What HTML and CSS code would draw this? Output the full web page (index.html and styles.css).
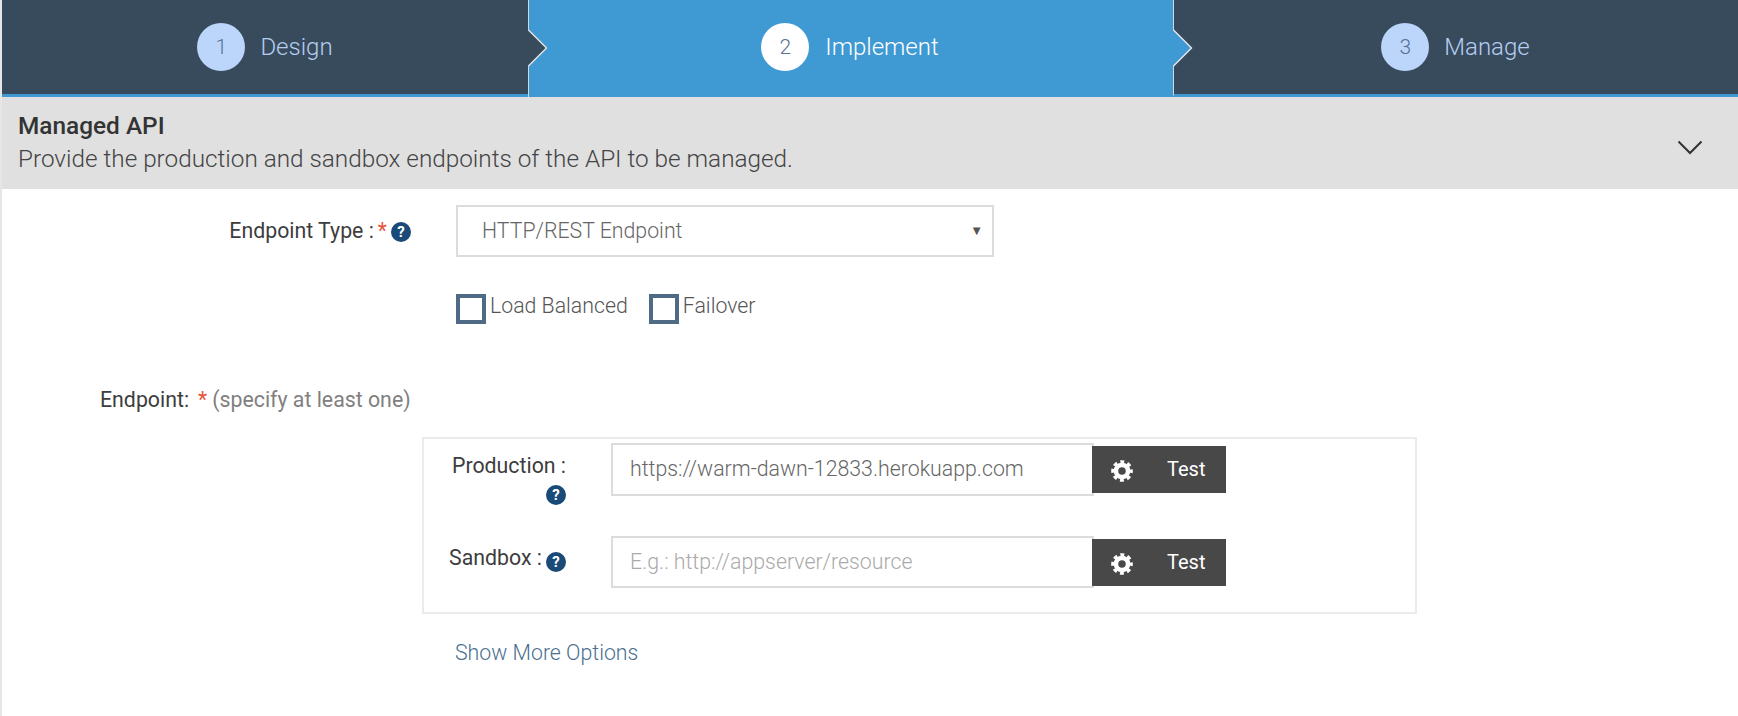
FILE: index.html
```html
<!DOCTYPE html>
<html lang="en">
<head>
<meta charset="utf-8">
<title>Managed API</title>
<link rel="stylesheet" href="styles.css">
</head>
<body>
<div class="page">
  <nav class="wizard">
    <div class="step step-one">
      <span class="num">1</span><span class="step-name">Design</span>
      <svg class="tip" width="20" height="38" viewBox="0 0 20 38"><path d="M0 0L19 19L0 38Z" fill="#384b5d"/><path d="M0 0.5L18.5 19L0 37.5" fill="none" stroke="#e6e6e6" stroke-width="1.4"/></svg>
    </div>
    <div class="step step-two">
      <span class="num">2</span><span class="step-name">Implement</span>
      <svg class="tip" width="20" height="38" viewBox="0 0 20 38"><path d="M0 0L19 19L0 38Z" fill="#3f99d3"/><path d="M0 0.5L18.5 19L0 37.5" fill="none" stroke="#e6e6e6" stroke-width="1.4"/></svg>
    </div>
    <div class="step step-three">
      <span class="num">3</span><span class="step-name">Manage</span>
    </div>
  </nav>
  <header class="section-head">
    <div>
      <h1 class="section-title">Managed API</h1>
      <p class="section-desc">Provide the production and sandbox endpoints of the API to be managed.</p>
    </div>
    <svg class="chevron" width="26" height="15" viewBox="0 0 26 15"><path d="M1.5 1.5L13 13L24.5 1.5" fill="none" stroke="#333" stroke-width="2"/></svg>
  </header>
  <main class="form">
    <div class="row-type">
      <div class="type-label">Endpoint Type :<span class="req">*</span><span class="help">?</span></div>
      <div class="select"><span>HTTP/REST Endpoint</span><span class="caret">▼</span></div>
    </div>
    <div class="checks">
      <label class="check"><span class="box"></span>Load Balanced</label>
      <label class="check"><span class="box"></span>Failover</label>
    </div>
    <div class="endpoint-label">Endpoint:<span class="req req-gap">*</span><span class="hint">(specify at least one)</span></div>
    <section class="panel">
      <div class="ep-row ep-prod">
        <div class="ep-label">Production :<span class="help help-block">?</span></div>
        <div class="ep-input">https://warm-dawn-12833.herokuapp.com</div>
        <button class="test" type="button">
          <svg class="gear" width="22" height="22" viewBox="0 0 24 24"><circle class="gear-ring" cx="12" cy="12" r="6.6"/><circle class="gear-teeth" cx="12" cy="12" r="10"/></svg>
          <span>Test</span>
        </button>
      </div>
      <div class="ep-row ep-sand">
        <div class="ep-label">Sandbox :<span class="help help-inline">?</span></div>
        <div class="ep-input ep-placeholder">E.g.: http://appserver/resource</div>
        <button class="test" type="button">
          <svg class="gear" width="22" height="22" viewBox="0 0 24 24"><circle class="gear-ring" cx="12" cy="12" r="6.6"/><circle class="gear-teeth" cx="12" cy="12" r="10"/></svg>
          <span>Test</span>
        </button>
      </div>
    </section>
    <a class="more" href="#">Show More Options</a>
  </main>
</div>
</body>
</html>
```

FILE: styles.css
```css
* { box-sizing: border-box; }
html, body { margin: 0; height: 100%; overflow: hidden; background: #fff; }
body { font-family: Roboto, "Liberation Sans", sans-serif; color: #4a4a4a; }
.page { height: 716px; border-left: 2px solid #e6e6e6; }

.wizard { display: flex; height: 97px; }
.step { position: relative; display: flex; align-items: center; justify-content: center; height: 97px; padding-bottom: 4px; }
.step-one { width: 526px; background: #384b5d; border-bottom: 3px solid #3f99d3; padding-bottom: 1px; }
.step-two { width: 645px; background: #3f99d3; border-left: 1px solid #cfdbe4; padding-right: 2px; }
.step-three { width: 565px; background: #384b5d; border-left: 1px solid #cfdbe4; border-bottom: 3px solid #3f99d3; padding-bottom: 1px; padding-right: 1px; }
.num { width: 48px; height: 48px; border-radius: 50%; background: #bcd6fb; color: #5b7191; display: flex; align-items: center; justify-content: center; font-size: 21px; font-weight: 300; margin-right: 16px; }
.step-one .num, .step-three .num { margin-right: 15px; }
.step-two .num { background: #fff; }
.step-name { font-size: 24px; font-weight: 300; color: #b5cdf0; }
.step-two .step-name { color: #fff; }
.tip { position: absolute; left: 100%; top: 29px; z-index: 2; }

.section-head { height: 92px; background: #e0e0e0; display: flex; justify-content: space-between; align-items: center; padding: 0 35px 0 16px; }
.section-title { margin: 0; font-size: 24.4px; line-height: 30px; font-weight: 500; color: #333; }
.section-desc { margin: 1px 0 0; font-size: 24.3px; line-height: 34px; font-weight: 300; color: #444; }
.chevron { margin-top: 8px; }

.form { font-size: 21.3px; }
.row-type { display: flex; padding-top: 16px; height: 67px; }
.type-label { width: 454px; padding-right: 45px; display: flex; justify-content: flex-end; align-items: center; height: 51px; color: #3d3d3d; }
.req { color: #e5533d; margin-left: 4px; }
.help { display: inline-flex; align-items: center; justify-content: center; width: 20px; height: 20px; border-radius: 50%; background: #1a4a78; color: #fff; font-size: 15px; font-weight: 700; }
.type-label .help { margin-left: 4px; margin-top: 2px; }
.select { width: 538px; height: 52px; border: 2px solid #dcdcdc; display: flex; align-items: center; justify-content: space-between; padding: 0 9px 1px 24px; color: #666; font-weight: 300; }
.caret { font-size: 13px; color: #555; }

.checks { display: flex; padding: 38px 0 0 454px; height: 79px; }
.check { display: flex; align-items: flex-start; margin-right: 21px; color: #555; font-weight: 300; line-height: 23px; }
.box { width: 30px; height: 30px; border: 4px solid #4f6a84; margin-right: 4px; }

.endpoint-label { padding: 51px 0 0 98px; height: 102px; line-height: 28px; color: #3d3d3d; }
.req-gap { margin: 0 5px 0 9px; }
.hint { color: #808080; }

.panel { margin: 0 0 0 420px; width: 995px; height: 177px; border: 2px solid #ebebeb; padding-top: 4px; }
.ep-row { display: flex; align-items: flex-start; }
.ep-prod { height: 93px; }
.ep-label { width: 142px; text-align: right; color: #3d3d3d; line-height: 26px; padding-top: 10px; flex: none; }
.help-block { display: flex; margin: 6px 0 0 auto; }
.ep-sand .ep-label { padding-top: 9px; }
.help-inline { margin-left: 4px; vertical-align: -2px; }
.ep-input { width: 483px; height: 53px; margin-left: 45px; flex: none; border: 2px solid #dcdcdc; padding-left: 17px; line-height: 47px; color: #666; font-weight: 300; }
.ep-placeholder { height: 52px; color: #aaa; }
.test { width: 134px; height: 47px; margin: 3px 0 0 -2px; border: 0; background: #484848; color: #fff; font: 400 20px Roboto, sans-serif; display: flex; align-items: center; padding: 2px 0 0 19px; flex: none; }
.test span { margin-left: 34px; margin-top: -3px; }
.gear { display: block; }
.gear-ring { fill: none; stroke: #fff; stroke-width: 5; }
.gear-teeth { fill: none; stroke: #fff; stroke-width: 3.6; stroke-dasharray: 4.2 3.654; stroke-dashoffset: 2.1; }

.more { display: block; margin: 25px 0 0 453px; color: #4a6f90; text-decoration: none; font-weight: 300; line-height: 28px; }
```
